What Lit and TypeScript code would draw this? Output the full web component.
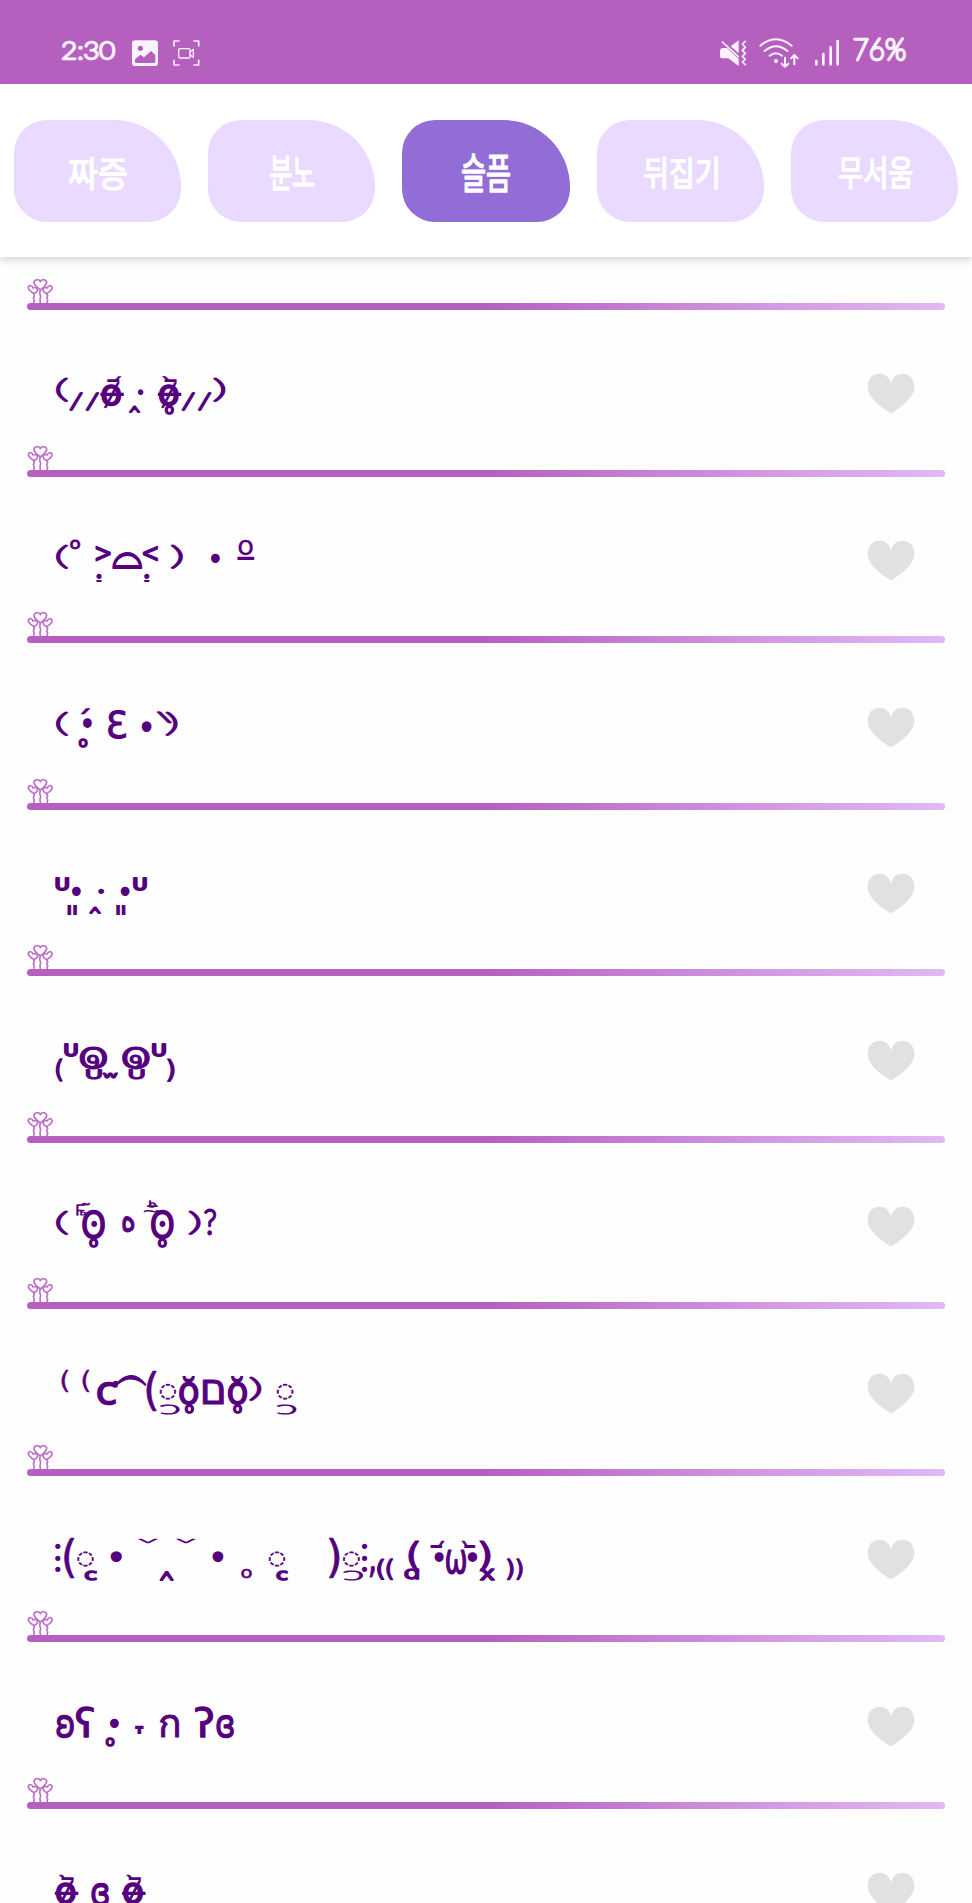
import { LitElement, html, svg, css } from "lit";
import { customElement, property } from "lit/decorators.js";

/** A glyph with the box its ink fills: text, left, top, right, bottom, outline width, font key. */
type Glyph = [string, number, number, number, number, number?, string?];

interface Face {
  top: number; // y of the drawing grid's origin within the page
  unit: number; // horizontal grid units per CSS pixel; vertical is always 3
  glyphs: Glyph[];
}

const FONTS: Record<string, [number, string]> = {
  n: [400, '"DejaVu Sans", "Noto Sans", sans-serif'],
  t: [100, 'Lato, "DejaVu Sans", sans-serif'],
  k: [400, '"Noto Sans CJK KR", sans-serif'],
};

const ctx = document.createElement("canvas").getContext("2d")!;

/** Scales a run of text so that its ink exactly fills the given box. */
function fit([str, l, t, r, b, sw = 0, key = "n"]: Glyph) {
  const [weight, family] = FONTS[key];
  ctx.font = `${weight} 100px ${family}`;
  const m = ctx.measureText(str);
  const w = m.actualBoundingBoxLeft + m.actualBoundingBoxRight || 1;
  const h = m.actualBoundingBoxAscent + m.actualBoundingBoxDescent || 1;
  const sx = (r - l - sw) / w;
  const sy = (b - t - sw) / h;
  const tx = l + sw / 2 + m.actualBoundingBoxLeft * sx;
  const ty = t + sw / 2 + m.actualBoundingBoxAscent * sy;
  return svg`<text class="g ${key}" stroke-width=${sw / 3}
    transform="matrix(${sx} 0 0 ${sy} ${tx} ${ty})">${str}</text>`;
}

const glyphStyles = css`
  svg { display: block; flex: none; overflow: visible; }
  .g {
    font-size: 100px; fill: currentColor; stroke: currentColor;
    vector-effect: non-scaling-stroke; stroke-linejoin: round;
  }
  .n { font-family: "DejaVu Sans", "Noto Sans", sans-serif; font-weight: 400; }
  .t { font-family: Lato, "DejaVu Sans", sans-serif; font-weight: 100; }
  .k { font-family: "Noto Sans CJK KR", sans-serif; font-weight: 400; }
`;

const open = (x: number, y: number, w = 35, h = 80): Glyph => ["(", x, y, x + w, y + h, 8.5, "t"];
const close = (x: number, y: number, w = 35, h = 80): Glyph => [")", x, y, x + w, y + h, 8.5, "t"];
const slash = (x: number, y: number): Glyph => ["/", x, y, x + 40, y + 58, 8, "t"];
const dot = (x: number, y: number, w = 27, h = 28): Glyph => ["•", x, y, x + w, y + h];
const ring = (x: number, y: number): Glyph => ["o", x, y, x + 28, y + 29, 5];
const hook = (x: number, y: number, w = 58): Glyph => ["ɔ", x, y, x + w, y + 34, 7, "t"];
const crossed = (x: number, y: number): Glyph[] => [
  ["o", x + 5, y, x + 65, y + 66, 5],
  ["-", x, y + 29, x + 75, y + 39],
  ["/", x + 13, y - 6, x + 59, y + 72, 6, "t"],
  ["¯", x + 22, y - 16, x + 59, y - 7],
];
const spiral = (x: number): Glyph[] => [
  ["O", x, 621, x + 84, 691, 3],
  ["9", x + 23, 643, x + 60, 686, 4],
  ["∪", x + 19, 688, x + 67, 721, 5],
];

const FACES: Face[] = [
  { top: 260, unit: 3, glyphs: [
    open(168, 350), slash(208, 396), slash(257, 396), ...crossed(299, 372),
    ["´", 345, 347, 364, 360, 2], ["^", 386, 441, 421, 461, 5], dot(413, 386, 17, 17),
    ...crossed(471, 372), ["`", 487, 347, 508, 360, 2], ring(494, 436),
    slash(545, 396), slash(594, 396), close(640, 350),
  ] },
  { top: 510, unit: 3, glyphs: [
    open(168, 100), ["o", 210, 87, 241, 119, 3], [">", 286, 107, 333, 155, 4],
    dot(289, 192, 16, 15), ["-", 289, 211, 305, 217], ["⌓", 335, 127, 425, 175, 6],
    ["<", 428, 107, 475, 155, 4], dot(432, 192, 16, 15), ["-", 432, 211, 448, 217],
    close(513, 100), dot(632, 130), ["o", 715, 89, 758, 136, 1], ["_", 712, 140, 762, 150],
  ] },
  { top: 510, unit: 3, glyphs: [
    open(168, 600), ["´", 243, 597, 271, 616, 2], dot(248, 627, 27, 29), ring(235, 686),
    ["Ɛ", 324, 600, 378, 688, 3], dot(424, 635, 30, 33), ["\\", 471, 604, 514, 643, 9, "t"],
    close(497, 600),
  ] },
  { top: 840, unit: 3, glyphs: [
    ["U", 166, 110, 208, 153, 7], dot(215, 138), ["l", 202, 196, 214, 223], ["l", 219, 196, 231, 223],
    dot(294, 145, 18, 16), ["^", 267, 199, 303, 220, 5], dot(361, 138), ["l", 348, 196, 360, 223],
    ["l", 365, 196, 377, 223], ["U", 399, 110, 441, 153, 7],
  ] },
  { top: 840, unit: 3, glyphs: [
    ["(", 167, 658, 188, 726, 4], ["U", 192, 609, 234, 652, 7], ...spiral(238),
    ["w", 307, 699, 354, 717, 5], ...spiral(366), ["U", 455, 609, 498, 652, 7],
    [")", 501, 658, 524, 726, 4],
  ] },
  { top: 1170, unit: 3, glyphs: [
    open(168, 118), ["F", 229, 104, 256, 136, 5, "t"], ["~", 245, 99, 270, 109, 2],
    ["b", 241, 120, 258, 137, 4, "t"], ["O", 246, 119, 316, 208, 4], dot(273, 153, 18, 18),
    ring(267, 205), ["ه", 366, 138, 404, 188, 3],
    ["b", 447, 88, 468, 112, 5, "t"], ["-", 440, 105, 474, 110], ["~", 431, 119, 474, 128, 1],
    ["O", 452, 119, 522, 208, 4], dot(478, 153, 18, 18), ring(473, 205),
    close(566, 118), ["?", 612, 118, 649, 198, 8.5, "t"],
  ] },
  { top: 1170, unit: 3, glyphs: [
    ["(", 184, 602, 205, 667, 1], ["(", 247, 602, 268, 667, 1], ["c", 291, 638, 348, 707, 5],
    ["'", 340, 636, 353, 655], ["⌒", 345, 616, 438, 650, 3], ["(", 439, 605, 470, 724, 2],
    ["◌", 479, 642, 528, 691, 2], hook(480, 702), ["˘", 547, 616, 585, 635, 3],
    ["o", 537, 638, 596, 707, 4], ring(554, 705), ["ם", 608, 632, 672, 706, 3],
    ["˘", 692, 616, 730, 635, 3], ["o", 683, 638, 742, 707, 4], ring(699, 705),
    close(748, 617), ["◌", 830, 642, 880, 691, 2], hook(830, 702),
  ] },
  { top: 1500, unit: 2.8, glyphs: [
    dot(154, 132, 15, 15), dot(154, 168, 15, 15), dot(154, 200, 15, 15), ["(", 179, 113, 208, 234, 2],
    ["◌", 216, 153, 262, 200, 2], ["c", 236, 210, 271, 243, 6], dot(309, 156, 32, 32),
    ["v", 388, 115, 441, 134, 7, "t"], ["^", 446, 215, 487, 243, 5], ["v", 494, 115, 547, 134, 7, "t"],
    dot(594, 156, 31, 32), ["o", 675, 206, 705, 236, 2], ["◌", 752, 153, 798, 200, 2],
    ["c", 773, 210, 806, 243, 6], [")", 921, 113, 951, 234, 2], ["◌", 960, 153, 1007, 200, 2],
    hook(961, 210, 55), dot(1013, 132, 15, 15), dot(1013, 168, 15, 15),
    dot(1013, 200, 15, 15), [",", 1034, 197, 1050, 231, 2], ["(", 1055, 177, 1076, 243, 4],
    ["(", 1081, 177, 1101, 243, 4], ["(", 1143, 120, 1174, 215, 3], ["ɑ", 1131, 202, 1174, 239, 5],
    ["¯", 1205, 133, 1238, 143], ["´", 1227, 123, 1245, 140, 2], dot(1216, 155, 26, 30),
    ["ω", 1248, 147, 1306, 221, 3], ["`", 1292, 123, 1310, 140, 2], ["¯", 1300, 133, 1331, 143],
    dot(1309, 155, 27, 30), [")", 1342, 120, 1374, 215, 3], ["x", 1342, 204, 1386, 241, 5],
    [")", 1419, 177, 1439, 243, 4], [")", 1445, 177, 1464, 243, 4],
  ] },
  { top: 1620, unit: 3, glyphs: [
    ["ʚ", 168, 287, 222, 356, 4], ["ʕ", 227, 262, 282, 355, 4], dot(329, 295), ring(316, 352),
    ["-", 404, 319, 431, 329], ["ı", 412, 325, 424, 345], ["ก", 478, 285, 537, 355, 3],
    ["ʔ", 585, 262, 640, 355, 4], ["ɞ", 648, 287, 702, 356, 4],
  ] },
  { top: 1620, unit: 3, glyphs: [
    ...crossed(162, 787), ["`", 177, 763, 198, 777, 2], ["ɞ", 273, 787, 327, 858, 4],
    ...crossed(364, 787), ["`", 379, 763, 400, 777, 2],
  ] },
];

const FIRST_ROW = 310.1;
const PITCH = 166.55;

@customElement("status-bar")
class StatusBar extends LitElement {
  static styles = [glyphStyles, css`
    :host {
      display: flex; height: 84.4px; box-sizing: border-box; padding: 36px 60px 0;
      background: #b560bf; color: #faf2fc; justify-content: space-between; align-items: flex-start;
    }
    .side { display: flex; align-items: flex-start; }
    .line { fill: none; stroke: currentColor; stroke-linecap: round; stroke-linejoin: round; }
    .solid { fill: currentColor; }
    .hole { fill: #b560bf; }
  `];
  render() {
    return html`
      <div class="side">
        <svg width="200" height="36" viewBox="180 108 600 108">
          ${fit(["2:30", 185, 122, 346, 181, 8, "t"])}
          <rect class="solid" x="396" y="121" width="78" height="77" rx="10"/>
          <circle class="hole" cx="421" cy="145" r="8"/>
          <path class="hole" d="M405 185V178L421 164L432 172L453 153L466 165V185Q466 189 462 189H409Q405 189 405 185Z"/>
          <path class="line" stroke-width="5" stroke-linecap="butt" d="M522 138V123H537M582 123H596V138M596 181V195H582M537 195H522V181"/>
          <rect class="line" stroke-width="4" x="536" y="146" width="34" height="28" rx="4"/>
          <path class="line" stroke-width="4" d="M570 156L580 148V172L570 164"/>
        </svg>
      </div>
      <div class="side">
        <svg width="194" height="36" viewBox="696 108 582 108">
          <path class="solid" d="M702 153Q702 144 711 144H723L758 177V198L727 175H711Q702 175 702 167ZM734 139L758 121V160Z"/>
          <path class="line" stroke-width="5" d="M709 126L757 170"/>
          <path class="line" stroke-width="5" d="M778 124L769 132L778 142L769 151L778 160L769 169L778 178L769 186L778 194"/>
          <path class="line" stroke-width="6" d="M823 137Q870 98 917 137M836 153Q870 124 904 153M851 167Q870 152 888 167"/>
          <circle class="solid" cx="870" cy="183" r="6"/>
          <path class="line" stroke-width="6" d="M897 173V199M887 191L897 200L907 191M925 193V167M915 175L925 165L935 175"/>
          <path class="line" stroke-width="8" d="M991 183V193M1012 162V193M1034 142V193M1055 123V193"/>
          ${fit(["76%", 1102, 114, 1260, 186, 8, "t"])}
        </svg>
      </div>`;
  }
}

@customElement("mood-tab")
class MoodTab extends LitElement {
  @property() label = "";
  @property({ type: Boolean, reflect: true }) active = false;
  @property({ attribute: false }) box: [number, number, number, number] = [0, 0, 1, 1];
  static styles = [glyphStyles, css`
    :host {
      display: block; flex: 1; height: 102.6px;
      border-radius: 33px 67px 33px 33px; background: #eadaff; color: #fff;
    }
    :host([active]) { background: #926dd6; }
  `];
  render() {
    return html`<svg width="100%" height="100%" viewBox="0 0 502 307" preserveAspectRatio="none">
      ${fit([this.label, ...this.box, 4, "k"])}
    </svg>`;
  }
}

@customElement("flower-rule")
class FlowerRule extends LitElement {
  static styles = css`
    :host { display: block; padding: 0 27px; }
    svg { display: block; fill: none; stroke: #bd70c7; stroke-width: 5; stroke-linejoin: round; }
    .bar {
      height: 7px; border-radius: 4px;
      background: linear-gradient(90deg, #b560bf 50%, #d49be4 82%, #e1b9f3);
    }
  `;
  render() {
    return html`
      <svg width="27" height="25" viewBox="82 55 81 75">
        <path d="M122 91C114 84 102 77 103 67C105 58 119 58 122 66C125 58 139 58 141 67C142 77 130 84 122 91Z"/>
        <path d="M103 102C95 97 84 90 86 82C89 76 98 77 100 85C104 82 111 84 113 88C116 94 109 99 103 102Z"/>
        <path d="M141 102C149 97 160 90 157 82C154 76 145 77 143 85C139 82 132 84 131 88C128 94 135 99 141 102Z"/>
        <path d="M102 102L104 108L101 115L104 121L102 130M122 91L120 101L123 111L121 120L122 130M141 102L144 108L141 115L144 121L142 130"/>
      </svg>
      <div class="bar"></div>`;
  }
}

@customElement("face-row")
class FaceRow extends LitElement {
  @property({ attribute: false }) face!: Face;
  @property({ type: Number }) index = 0;
  static styles = [glyphStyles, css`
    :host { display: flex; flex-direction: column; height: 166.55px; flex: none; }
    .item { display: flex; flex: 1; min-height: 0; padding-right: 57px; justify-content: space-between; }
    .words { width: 600px; height: 134.55px; color: #55007d; }
    .heart { width: 48px; height: 41px; margin-top: 63.4px; fill: #e1e1e1; }
  `];
  render() {
    const { top, unit, glyphs } = this.face;
    const y = (FIRST_ROW + PITCH * this.index - top) * 3;
    return html`
      <div class="item">
        <svg class="words" preserveAspectRatio="none"
          viewBox="0 ${y} ${600 * unit} ${134.55 * 3}">${glyphs.map(fit)}</svg>
        <svg class="heart" viewBox="0 0 144 123">
          <path d="M72 121C49 108 2 76 2 42C2 15 19 2 38 2C55 2 69 13 72 33C75 13 89 2 106 2C125 2 142 15 142 42C142 76 95 108 72 121Z"/>
        </svg>
      </div>
      <flower-rule></flower-rule>`;
  }
}

@customElement("app-root")
class AppRoot extends LitElement {
  static styles = css`
    :host {
      display: flex; flex-direction: column; height: 1903px; overflow: hidden;
      background: #fefefe; font-family: "Noto Sans CJK KR", sans-serif;
    }
    status-bar { flex: none; }
    nav {
      display: flex; flex: none; gap: 26.8px; box-sizing: border-box; height: 172.8px;
      padding: 35.2px 13.6px 0; background: #fff; box-shadow: 0 2px 9px rgba(0, 0, 0, 0.2);
      clip-path: inset(0 0 -20px 0);
    }
    main { display: flex; flex-direction: column; padding-top: 20.9px; }
  `;
  render() {
    return html`
      <status-bar></status-bar>
      <nav>
        <mood-tab label="짜증" .box=${[163, 110, 339, 212]}></mood-tab>
        <mood-tab label="분노" .box=${[185, 105, 319, 209]}></mood-tab>
        <mood-tab label="슬픔" active .box=${[179, 100, 325, 216]}></mood-tab>
        <mood-tab label="뒤집기" .box=${[140, 109, 363, 209]}></mood-tab>
        <mood-tab label="무서움" .box=${[142, 108, 365, 209]}></mood-tab>
      </nav>
      <main>
        <flower-rule></flower-rule>
        ${FACES.map((f, i) => html`<face-row .face=${f} .index=${i}></face-row>`)}
      </main>`;
  }
}
